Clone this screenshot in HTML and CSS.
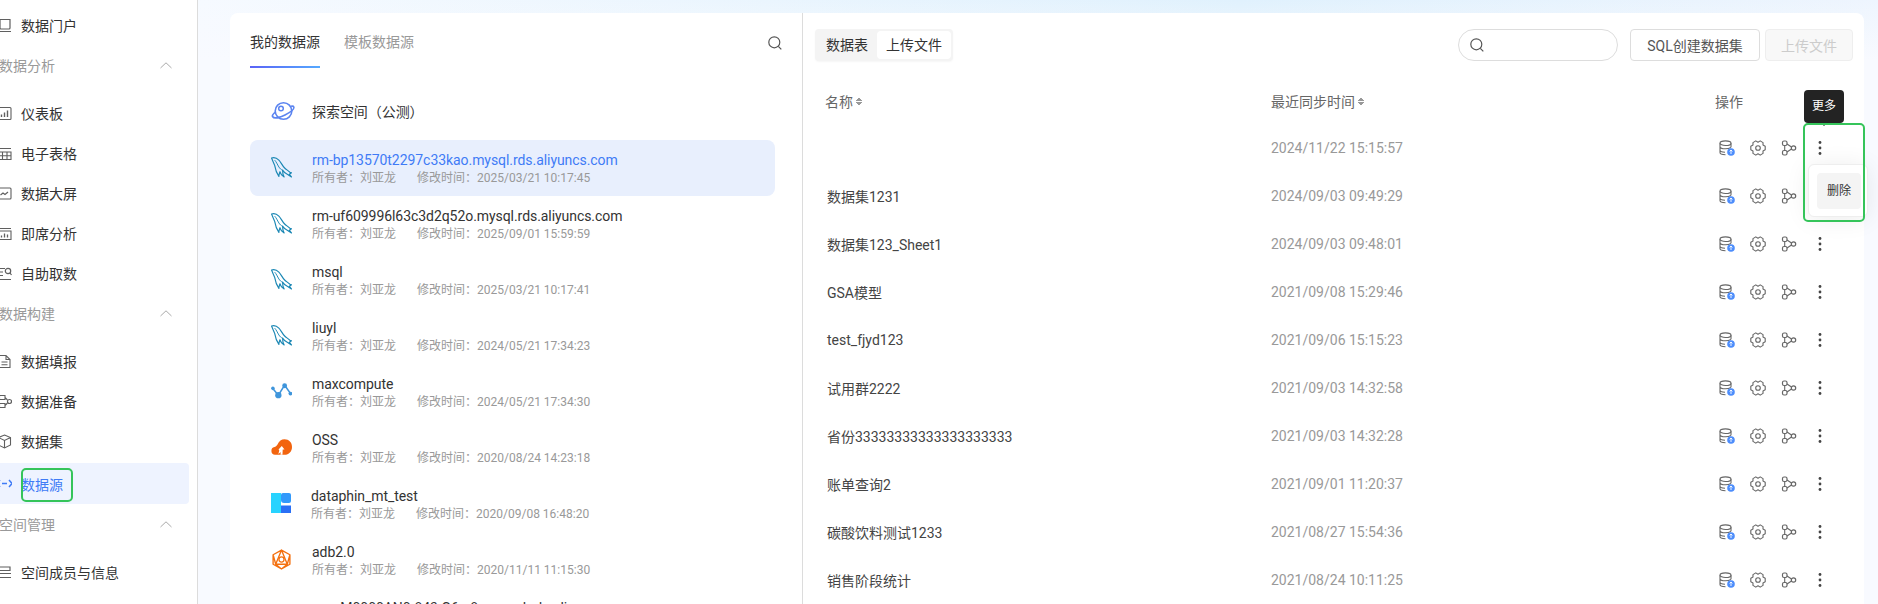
FILE: index.html
```html
<!DOCTYPE html>
<html lang="zh-CN">
<head>
<meta charset="utf-8">
<title>数据源</title>
<link rel="stylesheet" href="styles.css">
</head>
<body>
<svg class="defs" aria-hidden="true">
  <symbol id="i-portal" viewBox="0 0 15 15"><path d="M3 1.500h10v8.500a1 1 0 0 1-1 1H4a1 1 0 0 1-1-1zM1 13.500h13" fill="none" stroke="currentColor" stroke-width="1.200"/></symbol>
  <symbol id="i-dash" viewBox="0 0 15 15"><rect x="1" y="1.500" width="13" height="12" rx="1" fill="none" stroke="currentColor" stroke-width="1.100"/><path d="M4.500 11V8.500M7.500 11V6.500M10.500 11V4.500" stroke="currentColor" stroke-width="1.400"/></symbol>
  <symbol id="i-sheet" viewBox="0 0 15 15"><path d="M1 2.500h13M1 6h13v7.500H1zM1 9.700h13M5.500 6v7.500M10 6v7.500" fill="none" stroke="currentColor" stroke-width="1.100"/></symbol>
  <symbol id="i-screen" viewBox="0 0 15 15"><rect x="1" y="2" width="13" height="11" rx="1" fill="none" stroke="currentColor" stroke-width="1.100"/><path d="M3.500 9l2.500-2 2 1.500 3-2.500" fill="none" stroke="currentColor" stroke-width="1.200"/></symbol>
  <symbol id="i-adhoc" viewBox="0 0 15 15"><path d="M1 2.500h13M1 5h13v8.500H1z" fill="none" stroke="currentColor" stroke-width="1.100"/><path d="M4.500 11.500V9.500M7.500 11.500V7.500M10.500 11.500V8.500" stroke="currentColor" stroke-width="1.300"/></symbol>
  <symbol id="i-self" viewBox="0 0 15 15"><path d="M0 2.500h8M0 6h6M0 9.500h6M0 13.500h14" fill="none" stroke="currentColor" stroke-width="1.100"/><circle cx="11" cy="5" r="2.700" fill="none" stroke="currentColor" stroke-width="1.200"/><path d="M13 7l1.500 2" stroke="currentColor" stroke-width="1.200"/></symbol>
  <symbol id="i-form" viewBox="0 0 15 15"><path d="M2 1.500h7l4 4v8H2zM9 1.500v4h4M4.500 8h6M4.500 10.800h6" fill="none" stroke="currentColor" stroke-width="1.100"/></symbol>
  <symbol id="i-prep" viewBox="0 0 15 15"><path d="M2.500 1.500h5.500v4H2.500zM2.500 9.500h5.500v4H2.500zM2 5.500v4M8 3.500l2.500 2.500M8 11.500l2.500-2.500" fill="none" stroke="currentColor" stroke-width="1.100"/><circle cx="12.500" cy="7.500" r="2" fill="none" stroke="currentColor" stroke-width="1.200"/></symbol>
  <symbol id="i-cube" viewBox="0 0 15 15"><path d="M7.500 1l6 2.500v7.500l-6 3-6-3V3.500zM1.500 3.500l6 3 6-3M7.500 6.500v7.500" fill="none" stroke="currentColor" stroke-width="1.100"/></symbol>
  <symbol id="i-source" viewBox="0 0 15 15"><path d="M3 4L0 7.500 3 11M12 4l3 3.500-3 3.500M5 7.500h5" fill="none" stroke="currentColor" stroke-width="1.500"/></symbol>
  <symbol id="i-members" viewBox="0 0 15 15"><path d="M2 2h11v3.500H2zM1 8.500h13M1 12.500h13" fill="none" stroke="currentColor" stroke-width="1.200"/></symbol>
  <symbol id="i-chev" viewBox="0 0 12 7"><path d="M.5 6L6 .8 11.500 6" fill="none" stroke="currentColor" stroke-width="1"/></symbol>
  <symbol id="i-search" viewBox="0 0 14 14"><circle cx="6.300" cy="6.300" r="5.500" fill="none" stroke="currentColor" stroke-width="1.200"/><path d="M10.300 10.300l3 3" stroke="currentColor" stroke-width="1.200"/></symbol>
  <symbol id="i-dolphin" viewBox="0 0 20 20"><path d="M.5 1C3 .2 5.500 1 7.500 3c2 2 3 5 5.500 7.500 1.500 1.500 3.500 2.500 5 4l1.500.5-2 1.500 2 2.500-4-2.500c-2-1-3.500-2.500-4.500-4 0 2.500.5 4.500 1.500 6.500-2-1-3.500-3-4-5-.5 1.500-1 3-1 4.500-2.500-3.500-3.500-7.500-4-10.500C2.500 5.500 1.500 3.500.5 1z" fill="none" stroke="currentColor" stroke-width="1.100" stroke-linejoin="round"/><path d="M3.500 3c1.500 1.500 2.500 4 4 6.500 1 1.500 2 2.500 3.500 3" fill="none" stroke="currentColor" stroke-width=".9"/></symbol>
  <symbol id="i-planet" viewBox="0 0 24 24"><circle cx="12.500" cy="11" r="8.300" fill="none" stroke="currentColor" stroke-width="1.600"/><path d="M4.500 12C2 14 1 15.500 1.500 16.500 3 19 9 17.500 14 15s9.500-6 8.800-8c-.4-1-1.800-1-2.800-.7" fill="none" stroke="currentColor" stroke-width="1.600"/><circle cx="10" cy="8.500" r="2.300" fill="none" stroke="currentColor" stroke-width="1.500"/></symbol>
  <symbol id="i-max" viewBox="0 0 20 16"><path d="M1.500 5L7 11.500 13 2l6 8.500" fill="none" stroke="currentColor" stroke-width="1.500"/><circle cx="1.800" cy="5" r="1.700" fill="currentColor"/><circle cx="7" cy="11.500" r="3" fill="currentColor"/><circle cx="13" cy="2.500" r="2.300" fill="currentColor"/><circle cx="18.500" cy="10" r="1.800" fill="currentColor"/></symbol>
  <symbol id="i-oss" viewBox="0 0 21 16"><path d="M4 15.800a3.900 3.900 0 0 1-.5-7.700C4.500 7.600 5.500 7 6.500 5.500 8 2 10.500.3 13.500.3 18 .3 21 3.500 21 8c0 4.500-3 7.800-7.500 7.800z" fill="currentColor"/><path d="M7.500 10.500L10.800 7l2.700 3.500h-1.800l-.2 5.300H9.500l.2-2.800c-.5.800-1.500 1.500-2.500 1.800.6-1 1-2.500 1-3.800z" fill="#fff"/></symbol>
  <symbol id="i-dp" viewBox="0 0 20 20"><path d="M0 0h10v20H0z" fill="#28d3ff"/><path d="M10 12.500h10V20H10z" fill="#2a6ff5"/><path d="M12 0h6a2 2 0 0 1 2 2v6a2 2 0 0 1-2 2h-5a3 3 0 0 1-3-3V2a2 2 0 0 1 2-2z" fill="#3299fb"/></symbol>
  <symbol id="i-adb" viewBox="0 0 20 20"><path d="M10 1l8 4.500v9L10 19l-8-4.500v-9zM10 1L4.500 14.500h11zM2 5.500l2.500 9M18 5.500l-2.500 9M10 19l-5.500-4.500M10 19l5.500-4.500" fill="none" stroke="currentColor" stroke-width="1.300" stroke-linejoin="round"/><circle cx="10" cy="10" r="2.400" fill="#fff" stroke="currentColor" stroke-width="1.200"/></symbol>
  <symbol id="i-db" viewBox="0 0 16 16"><ellipse cx="6.500" cy="3.200" rx="5.500" ry="2.300" fill="none" stroke="#666" stroke-width="1.100"/><path d="M1 3.200v9.300c0 1.300 2.500 2.200 5.500 2.200M1 6.500c0 1.300 2.500 2.300 5.500 2.300 2 0 3.500-.3 5.500-1.300M1 10c0 1.200 2 2.200 5 2.300M12 3.200v4" fill="none" stroke="#666" stroke-width="1.100"/><circle cx="12" cy="12" r="3.800" fill="#4d8dfb"/><path d="M12 14V10M10.600 11.400L12 10l1.400 1.400" fill="none" stroke="#fff" stroke-width=".9"/></symbol>
  <symbol id="i-gear" viewBox="0 0 16 16"><path d="M15.200 6.300v3.400L13 10.900l.05 2.500-2.850 1.700L8 13.800l-2.200 1.300-2.850-1.700L3 10.900.8 9.700V6.300L3 5.100l-.05-2.500L5.800.9 8 2.200 10.200.9l2.850 1.700L13 5.100z" fill="none" stroke="#666" stroke-width="1.100" stroke-linejoin="round"/><circle cx="8" cy="8" r="2.300" fill="none" stroke="#666" stroke-width="1.100"/></symbol>
  <symbol id="i-flow" viewBox="0 0 16 16"><rect x="1.500" y="1" width="4.500" height="4.500" rx="1.500" fill="none" stroke="#666" stroke-width="1.200"/><rect x="1.500" y="10.500" width="4.500" height="4.500" rx="1.500" fill="none" stroke="#666" stroke-width="1.200"/><circle cx="12.500" cy="8" r="2.200" fill="none" stroke="#666" stroke-width="1.200"/><path d="M3.700 5.500v5M6 4l4.500 3M6 12l4.500-3" fill="none" stroke="#666" stroke-width="1.100"/></symbol>
  <symbol id="i-dots" viewBox="0 0 16 16"><circle cx="8" cy="2.500" r="1.400" fill="#444"/><circle cx="8" cy="8" r="1.400" fill="#444"/><circle cx="8" cy="13.500" r="1.400" fill="#444"/></symbol>
</svg>

<div class="app">
  <aside class="side">
    <a class="nav-item"><svg class="nav-icon"><use href="#i-portal"/></svg>数据门户</a>

    <div class="nav-head">数据分析<svg class="chev"><use href="#i-chev"/></svg></div>
    <div class="nav-group">
      <a class="nav-item"><svg class="nav-icon"><use href="#i-dash"/></svg>仪表板</a>
      <a class="nav-item"><svg class="nav-icon"><use href="#i-sheet"/></svg>电子表格</a>
      <a class="nav-item"><svg class="nav-icon"><use href="#i-screen"/></svg>数据大屏</a>
      <a class="nav-item"><svg class="nav-icon"><use href="#i-adhoc"/></svg>即席分析</a>
      <a class="nav-item"><svg class="nav-icon"><use href="#i-self"/></svg>自助取数</a>
    </div>

    <div class="nav-head">数据构建<svg class="chev"><use href="#i-chev"/></svg></div>
    <div class="nav-group">
      <a class="nav-item"><svg class="nav-icon"><use href="#i-form"/></svg>数据填报</a>
      <a class="nav-item"><svg class="nav-icon"><use href="#i-prep"/></svg>数据准备</a>
      <a class="nav-item"><svg class="nav-icon"><use href="#i-cube"/></svg>数据集</a>
      <a class="nav-item nav-active"><svg class="nav-icon"><use href="#i-source"/></svg>数据源<span class="mark-nav"></span></a>
    </div>

    <div class="nav-head">空间管理<svg class="chev"><use href="#i-chev"/></svg></div>
    <div class="nav-group">
      <a class="nav-item"><svg class="nav-icon"><use href="#i-members"/></svg>空间成员与信息</a>
    </div>
  </aside>

  <main class="main">
    <div class="card">
      <section class="sources">
        <div class="tabs">
          <span class="tab tab-on">我的数据源</span>
          <span class="tab">模板数据源</span>
          <svg class="tabs-search"><use href="#i-search"/></svg>
        </div>
        <div class="src-list">
          <div class="src src-single"><svg class="src-icon planet"><use href="#i-planet"/></svg><div class="src-title">探索空间（公测）</div></div>
          <div class="src src-on"><svg class="src-icon dolphin"><use href="#i-dolphin"/></svg><div><div class="src-title">rm-bp13570t2297c33kao.mysql.rds.aliyuncs.com</div><div class="src-sub"><span class="owner">所有者：刘亚龙</span>修改时间：2025/03/21 10:17:45</div></div></div>
          <div class="src"><svg class="src-icon dolphin"><use href="#i-dolphin"/></svg><div><div class="src-title">rm-uf609996l63c3d2q52o.mysql.rds.aliyuncs.com</div><div class="src-sub"><span class="owner">所有者：刘亚龙</span>修改时间：2025/09/01 15:59:59</div></div></div>
          <div class="src"><svg class="src-icon dolphin"><use href="#i-dolphin"/></svg><div><div class="src-title">msql</div><div class="src-sub"><span class="owner">所有者：刘亚龙</span>修改时间：2025/03/21 10:17:41</div></div></div>
          <div class="src"><svg class="src-icon dolphin"><use href="#i-dolphin"/></svg><div><div class="src-title">liuyl</div><div class="src-sub"><span class="owner">所有者：刘亚龙</span>修改时间：2024/05/21 17:34:23</div></div></div>
          <div class="src"><svg class="src-icon max"><use href="#i-max"/></svg><div><div class="src-title">maxcompute</div><div class="src-sub"><span class="owner">所有者：刘亚龙</span>修改时间：2024/05/21 17:34:30</div></div></div>
          <div class="src"><svg class="src-icon oss"><use href="#i-oss"/></svg><div><div class="src-title">OSS</div><div class="src-sub"><span class="owner">所有者：刘亚龙</span>修改时间：2020/08/24 14:23:18</div></div></div>
          <div class="src"><svg class="src-icon dp"><use href="#i-dp"/></svg><div><div class="src-title">dataphin_mt_test</div><div class="src-sub"><span class="owner">所有者：刘亚龙</span>修改时间：2020/09/08 16:48:20</div></div></div>
          <div class="src"><svg class="src-icon adb"><use href="#i-adb"/></svg><div><div class="src-title">adb2.0</div><div class="src-sub"><span class="owner">所有者：刘亚龙</span>修改时间：2020/11/11 11:15:30</div></div></div>
          <div class="src"><svg class="src-icon dolphin"><use href="#i-dolphin"/></svg><div><div class="src-title">rm-uM0000AN0-843-G6-a8s.mysql.rds.aliyuncs.com</div></div></div>
        </div>
      </section>

      <section class="tables">
        <div class="toolbar">
          <div class="seg"><span class="seg-item">数据表</span><span class="seg-item seg-on">上传文件</span></div>
          <div class="search"><svg class="search-icon"><use href="#i-search"/></svg></div>
          <button class="btn">SQL创建数据集</button>
          <button class="btn btn-off">上传文件</button>
        </div>
        <div class="thead">
          <span class="th">名称<i class="sort"></i></span>
          <span class="th">最近同步时间<i class="sort"></i></span>
          <span class="th">操作</span>
        </div>
        <div class="row"><span class="name"></span><span class="time">2024/11/22 15:15:57</span>
          <span class="ops"><svg class="op"><use href="#i-db"/></svg><svg class="op"><use href="#i-gear"/></svg><svg class="op"><use href="#i-flow"/></svg>
            <span class="more"><svg class="op"><use href="#i-dots"/></svg>
              <span class="tip">更多</span>
              <span class="menu"><span class="menu-item">删除</span></span>
              <span class="mark-more"></span>
            </span>
          </span>
        </div>
        <div class="row"><span class="name">数据集1231</span><span class="time">2024/09/03 09:49:29</span><span class="ops"><svg class="op"><use href="#i-db"/></svg><svg class="op"><use href="#i-gear"/></svg><svg class="op"><use href="#i-flow"/></svg></span></div>
        <div class="row"><span class="name">数据集123_Sheet1</span><span class="time">2024/09/03 09:48:01</span><span class="ops"><svg class="op"><use href="#i-db"/></svg><svg class="op"><use href="#i-gear"/></svg><svg class="op"><use href="#i-flow"/></svg><svg class="op"><use href="#i-dots"/></svg></span></div>
        <div class="row"><span class="name">GSA模型</span><span class="time">2021/09/08 15:29:46</span><span class="ops"><svg class="op"><use href="#i-db"/></svg><svg class="op"><use href="#i-gear"/></svg><svg class="op"><use href="#i-flow"/></svg><svg class="op"><use href="#i-dots"/></svg></span></div>
        <div class="row"><span class="name">test_fjyd123</span><span class="time">2021/09/06 15:15:23</span><span class="ops"><svg class="op"><use href="#i-db"/></svg><svg class="op"><use href="#i-gear"/></svg><svg class="op"><use href="#i-flow"/></svg><svg class="op"><use href="#i-dots"/></svg></span></div>
        <div class="row"><span class="name">试用群2222</span><span class="time">2021/09/03 14:32:58</span><span class="ops"><svg class="op"><use href="#i-db"/></svg><svg class="op"><use href="#i-gear"/></svg><svg class="op"><use href="#i-flow"/></svg><svg class="op"><use href="#i-dots"/></svg></span></div>
        <div class="row"><span class="name">省份33333333333333333333</span><span class="time">2021/09/03 14:32:28</span><span class="ops"><svg class="op"><use href="#i-db"/></svg><svg class="op"><use href="#i-gear"/></svg><svg class="op"><use href="#i-flow"/></svg><svg class="op"><use href="#i-dots"/></svg></span></div>
        <div class="row"><span class="name">账单查询2</span><span class="time">2021/09/01 11:20:37</span><span class="ops"><svg class="op"><use href="#i-db"/></svg><svg class="op"><use href="#i-gear"/></svg><svg class="op"><use href="#i-flow"/></svg><svg class="op"><use href="#i-dots"/></svg></span></div>
        <div class="row"><span class="name">碳酸饮料测试1233</span><span class="time">2021/08/27 15:54:36</span><span class="ops"><svg class="op"><use href="#i-db"/></svg><svg class="op"><use href="#i-gear"/></svg><svg class="op"><use href="#i-flow"/></svg><svg class="op"><use href="#i-dots"/></svg></span></div>
        <div class="row"><span class="name">销售阶段统计</span><span class="time">2021/08/24 10:11:25</span><span class="ops"><svg class="op"><use href="#i-db"/></svg><svg class="op"><use href="#i-gear"/></svg><svg class="op"><use href="#i-flow"/></svg><svg class="op"><use href="#i-dots"/></svg></span></div>
      </section>
    </div>
  </main>
</div>
</body>
</html>
```

FILE: styles.css
```css
* { box-sizing: border-box; }
html, body { margin: 0; height: 604px; overflow: hidden; }
body {
  font-family: Roboto, "Noto Sans CJK SC", sans-serif;
  font-size: 14px;
  color: #333;
  background: #fff;
}
.defs { position: absolute; width: 0; height: 0; }
.app { display: flex; height: 604px; }

/* sidebar */
.side {
  flex: 0 0 198px;
  padding: 5px 0 0;
  background: #fff;
  border-right: 1px solid #dcdcdc;
  overflow: hidden;
}
.nav-item {
  display: flex;
  align-items: center;
  gap: 9px;
  height: 40px;
  margin-left: -3px;
  margin-right: 8px;
  color: #333;
  position: relative;
}
.nav-icon { width: 15px; height: 15px; color: #5f5f5f; flex: none; }
.nav-head {
  display: flex;
  align-items: center;
  justify-content: space-between;
  height: 40px;
  margin-left: -1px;
  padding-right: 25px;
  color: #999;
}
.chev { width: 12px; height: 7px; color: #aaa; }
.nav-group { padding-top: 8px; }
.nav-active {
  height: 41px;
  margin-top: 2px;
  background: #eef3ff;
  border-radius: 0 4px 4px 0;
  color: #3f7bf6;
}
.nav-active .nav-icon { color: #3f7bf6; }
.mark-nav {
  position: absolute;
  left: 24px;
  top: 5px;
  width: 52px;
  height: 34px;
  border: 2px solid #35c45a;
  border-radius: 5px;
}

/* main */
.main {
  flex: 1;
  min-width: 0;
  padding: 13px 14px 0 32px;
  background:
    linear-gradient(180deg, rgba(255,255,255,0) 0, #f8faff 60px),
    linear-gradient(90deg, #f6faff 0, #e0f1fd 62%, #eef5fe 100%);
}
.card {
  display: flex;
  height: 591px;
  background: #fff;
  border-radius: 8px 8px 0 0;
}

/* data sources */
.sources {
  flex: 0 0 573px;
  border-right: 1px solid #dcdcdc;
  height: 591px;
  overflow: hidden;
}
.tabs {
  display: flex;
  align-items: flex-start;
  height: 71px;
  padding: 20px 20px 0;
  gap: 24px;
}
.tab { height: 35px; line-height: 19px; color: #999; position: relative; }
.tab-on { color: #333; }
.tab-on::after {
  content: "";
  position: absolute;
  left: 0;
  right: 0;
  bottom: 0;
  height: 2px;
  background: linear-gradient(90deg, #5a63f6, #55a9ff);
}
.tabs-search { width: 14px; height: 14px; margin: 3px 0 0 auto; color: #555; }
.src-list { margin: 0 27px 0 20px; }
.src {
  display: flex;
  align-items: flex-start;
  height: 56px;
  padding: 11px 0 0 21px;
  border-radius: 8px;
}
.src-single { align-items: center; padding-top: 0; }
.src-on { background: #e8effd; }
.src-on .src-title { color: #3f7bf6; }
.src-icon { flex: none; width: 21px; height: 21px; margin: 6px 20px 0 0; }
.src-single .src-icon { width: 24px; height: 24px; margin: 0 17px 0 0; }
.planet { color: #5b84f0; }
.dolphin { color: #1a87b4; }
.max { color: #3f95db; height: 17px; margin-top: 8px; }
.oss { color: #f2640f; height: 16px; margin-top: 8px; }
.dp { width: 20px; height: 20px; }
.adb { color: #f4700f; }
.src-title { line-height: 18px; color: #333; white-space: nowrap; letter-spacing: -.06px; }
.src-sub { line-height: 18px; font-size: 12px; color: #999; white-space: nowrap; }
.owner { margin-right: 21px; }

/* tables */
.tables { flex: 1; min-width: 0; padding: 16px 11px 0 12px; }
.toolbar { display: flex; align-items: center; height: 32px; }
.seg {
  display: flex;
  height: 32px;
  padding: 2px;
  background: #f4f4f4;
  border-radius: 4px;
  box-shadow: 0 1px 2px rgba(0,0,0,.04);
}
.seg-item { width: 60px; line-height: 28px; text-align: center; }
.seg-on { width: 74px; background: #fff; border-radius: 4px; }
.search {
  display: flex;
  align-items: center;
  width: 160px;
  height: 32px;
  margin-left: auto;
  padding-left: 11px;
  border: 1px solid #ddd;
  border-radius: 16px;
}
.search-icon { width: 14px; height: 14px; color: #555; }
.btn {
  height: 32px;
  width: 130px;
  margin-left: 12px;
  padding: 0;
  font: inherit;
  color: #555;
  background: #fff;
  border: 1px solid #ddd;
  border-radius: 4px;
}
.btn-off {
  width: 88px;
  margin-left: 5px;
  color: #ccc;
  background: #f8f8f8;
  border-color: #eee;
}
.thead, .row { display: grid; grid-template-columns: 446px 444px 1fr; align-items: center; padding-left: 10px; }
.thead { height: 47px; margin-top: 16px; padding-top: 1px; color: #666; }
.th { display: flex; align-items: center; }
.sort {
  width: 6px;
  height: 9px;
  margin-left: 3px;
  background:
    linear-gradient(135deg, transparent 50%, #999 50%) 0 0/3px 4px no-repeat,
    linear-gradient(225deg, transparent 50%, #999 50%) 3px 0/3px 4px no-repeat,
    linear-gradient(45deg, transparent 50%, #999 50%) 0 5px/3px 4px no-repeat,
    linear-gradient(315deg, transparent 50%, #999 50%) 3px 5px/3px 4px no-repeat;
}
.row { height: 48px; }
.name { padding-left: 2px; color: #444; white-space: nowrap; }
.time { color: #999; }
.ops { display: flex; gap: 15px; padding-left: 4px; }
.op { width: 16px; height: 16px; display: block; }
.more { position: relative; width: 16px; height: 16px; }
.tip {
  position: absolute;
  left: -8px;
  top: -50px;
  width: 40px;
  height: 33px;
  line-height: 33px;
  text-align: center;
  font-size: 12px;
  color: #fff;
  background: #232323;
  border-radius: 4px;
  z-index: 2;
}
.tip::after {
  content: "";
  position: absolute;
  left: 16px;
  bottom: -3px;
  border: 4px solid transparent;
  border-top-color: #232323;
  border-bottom-width: 0;
}
.menu {
  position: absolute;
  left: -4px;
  top: 24px;
  width: 60px;
  height: 53px;
  padding: 8px;
  background: #fff;
  border: 1px solid #eee;
  border-radius: 6px;
  box-shadow: 0 2px 24px rgba(0,0,0,.08);
  z-index: 2;
}
.menu-item {
  display: block;
  width: 44px;
  height: 36px;
  line-height: 36px;
  text-align: center;
  font-size: 12px;
  background: #f4f4f4;
  border-radius: 4px;
}
.mark-more {
  position: absolute;
  left: -9px;
  top: -17px;
  width: 62px;
  height: 99px;
  border: 2px solid #35c45a;
  border-radius: 5px;
  z-index: 3;
}
```
